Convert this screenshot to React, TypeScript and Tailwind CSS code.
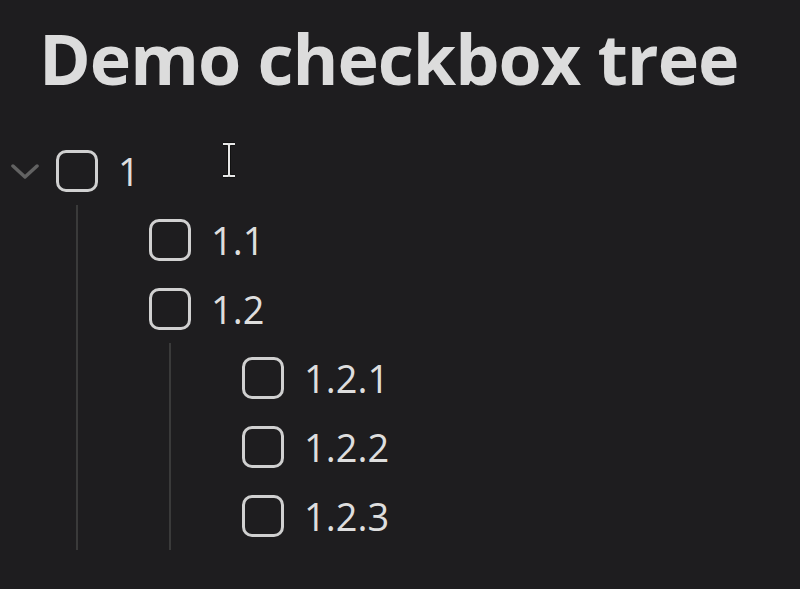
import type { ReactNode } from "react";

interface TreeNode {
  label: string;
  children?: TreeNode[];
}

const tree: TreeNode = {
  label: "1",
  children: [
    { label: "1.1" },
    {
      label: "1.2",
      children: [{ label: "1.2.1" }, { label: "1.2.2" }, { label: "1.2.3" }],
    },
  ],
};

function Chevron() {
  return (
    <svg width="28" height="18" viewBox="0 0 28 18" fill="none">
      <polyline points="2,4 14,15 26,4" stroke="#626262" strokeWidth="3.5" strokeLinecap="round" strokeLinejoin="round" />
    </svg>
  );
}

function Row({ node, expandable }: { node: TreeNode; expandable: boolean }) {
  return (
    <div className="flex h-[69px] items-center">
      <div className="flex w-[56px] shrink-0 items-center justify-center pr-[6px]">{expandable ? <Chevron /> : null}</div>
      <span className="h-[42px] w-[42px] shrink-0 rounded-[10px] border-[3px] border-[#d0d0d0]" />
      <span className="ml-[20px] text-[38px] leading-none text-[#dedede]">{node.label}</span>
    </div>
  );
}

function Node({ node }: { node: TreeNode }): ReactNode {
  const kids = node.children ?? [];
  return (
    <div>
      <Row node={node} expandable={kids.length > 0 && node.label === "1"} />
      {kids.length > 0 ? (
        <div className="ml-[76px] border-l-2 border-[#3a3a3a] pl-[15px]">
          {kids.map((child) => (
            <Node key={child.label} node={child} />
          ))}
        </div>
      ) : null}
    </div>
  );
}

export default function App() {
  return (
    <div className="relative h-[589px] w-[800px] overflow-hidden bg-[#1e1d1f] font-['Open_Sans',sans-serif]">
      <h1 className="ml-[39px] pt-[14px] text-[70px] font-bold leading-[88px] tracking-[-1px] text-[#dcdcdc]">
        Demo checkbox tree
      </h1>
      <div className="mt-[34px]">
        <Node node={tree} />
      </div>
      <svg className="absolute left-[220px] top-[142px]" width="18" height="36" viewBox="0 0 18 36">
        <path d="M3 2h5l1 1 1-1h5M9 3v30M3 34h5l1-1 1 1h5" stroke="#111" strokeWidth="4" fill="none" />
        <path d="M3 2h5l1 1 1-1h5M9 3v30M3 34h5l1-1 1 1h5" stroke="#e8e8e8" strokeWidth="2" fill="none" />
      </svg>
    </div>
  );
}
